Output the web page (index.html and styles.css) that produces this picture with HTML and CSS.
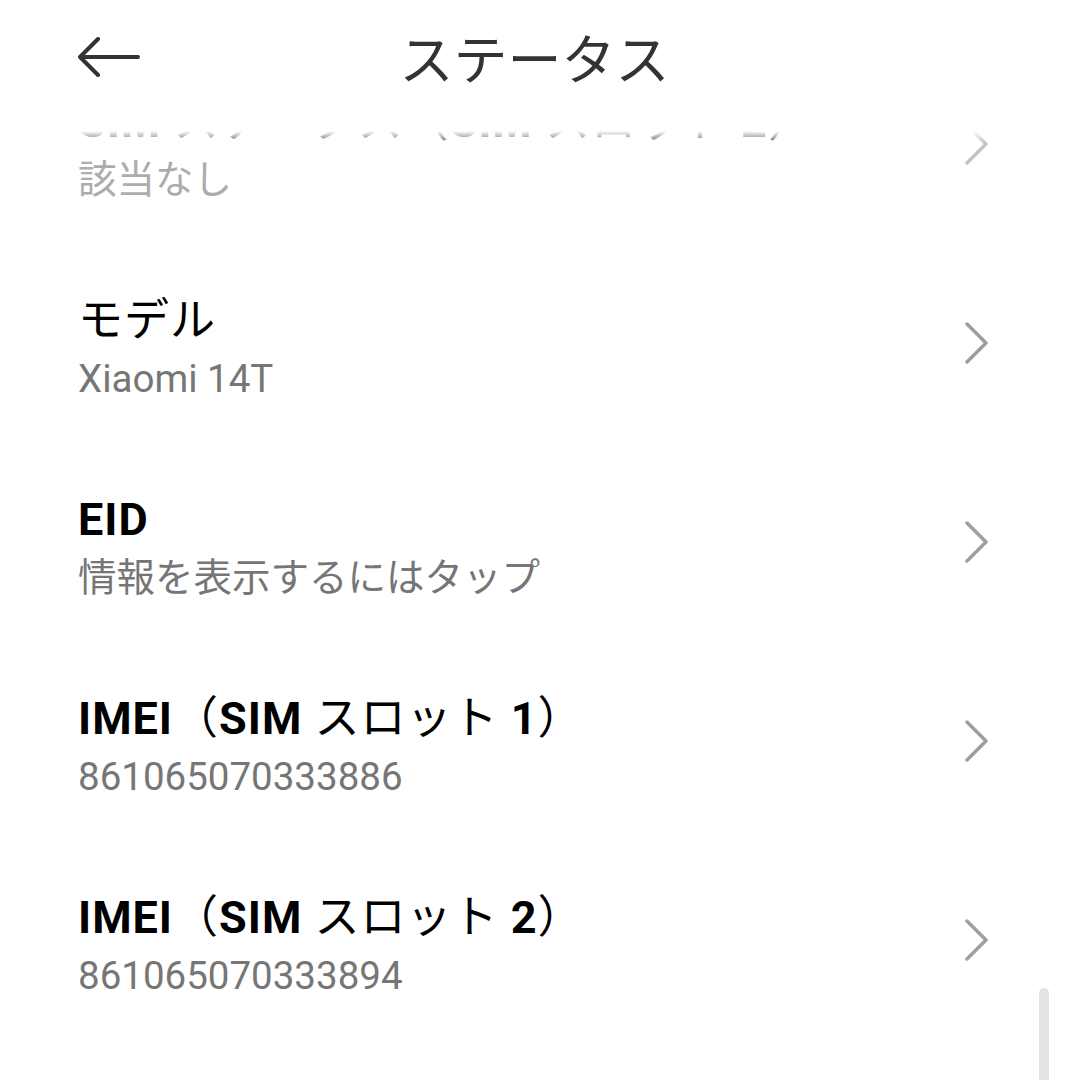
FILE: index.html
```html
<!DOCTYPE html>
<html lang="ja">

<head>
    <meta charset="UTF-8">
    <meta name="viewport" content="width=device-width, initial-scale=1.0">
    <title>ステータス</title>
    <link rel="stylesheet" href="styles.css">
</head>

<body>
    <header class="app-bar">
        <button class="back-btn" aria-label="戻る">
            <svg width="64" height="40" viewBox="0 0 64 40">
                <path d="M62 20H4M22 2L4 20l18 18" fill="none" stroke="#333" stroke-width="4" stroke-linecap="round" stroke-linejoin="round"/>
            </svg>
        </button>
        <h1>ステータス</h1>
        <span></span>
    </header>

    <main class="list">
        <div class="row faded">
            <div class="text">
                <div class="title"><b>SIM</b> ステータス（<b>SIM</b> スロット <b>2</b>）</div>
                <div class="sub">該当なし</div>
            </div>
            <svg class="chev" width="26" height="42" viewBox="0 0 26 42"><path d="M3 2l19 19L3 40" /></svg>
        </div>
        <div class="row">
            <div class="text">
                <div class="title">モデル</div>
                <div class="sub">Xiaomi 14T</div>
            </div>
            <svg class="chev" width="26" height="42" viewBox="0 0 26 42"><path d="M3 2l19 19L3 40" /></svg>
        </div>
        <div class="row">
            <div class="text">
                <div class="title"><b>EID</b></div>
                <div class="sub">情報を表示するにはタップ</div>
            </div>
            <svg class="chev" width="26" height="42" viewBox="0 0 26 42"><path d="M3 2l19 19L3 40" /></svg>
        </div>
        <div class="row">
            <div class="text">
                <div class="title"><b>IMEI</b>（<b>SIM</b> スロット <b>1</b>）</div>
                <div class="sub">861065070333886</div>
            </div>
            <svg class="chev" width="26" height="42" viewBox="0 0 26 42"><path d="M3 2l19 19L3 40" /></svg>
        </div>
        <div class="row">
            <div class="text">
                <div class="title"><b>IMEI</b>（<b>SIM</b> スロット <b>2</b>）</div>
                <div class="sub">861065070333894</div>
            </div>
            <svg class="chev" width="26" height="42" viewBox="0 0 26 42"><path d="M3 2l19 19L3 40" /></svg>
        </div>
    </main>

    <div class="scrollbar"></div>
</body>

</html>
```

FILE: styles.css
```css
body {
    margin: 0;
    padding: 0;
    background: #fff;
    font-family: Roboto, "Noto Sans CJK JP", sans-serif;
    overflow: hidden;
}

.app-bar {
    position: fixed;
    top: 0;
    left: 0;
    right: 0;
    height: 131px;
    background: #fff;
    z-index: 2;
    display: grid;
    grid-template-columns: 1fr auto 1fr;
    align-items: start;
    padding: 0 76px;
}

/* soft fade where the list slides under the bar */
.app-bar::after {
    content: "";
    position: absolute;
    left: 0;
    right: 0;
    top: 131px;
    height: 12px;
    background: linear-gradient(#fff, rgba(255, 255, 255, 0));
}

.back-btn {
    background: none;
    border: none;
    padding: 0;
    margin-top: 37px;
    width: 64px;
    height: 40px;
    cursor: pointer;
    justify-self: start;
}

.back-btn svg {
    display: block;
}

.app-bar h1 {
    margin: 0;
    margin-top: 21px;
    font-family: "Noto Sans CJK JP", sans-serif;
    font-weight: 400;
    font-size: 54px;
    line-height: 72px;
    color: #333;
}

.list {
    padding-top: 44px;
}

.row {
    height: 199px;
    display: flex;
    align-items: center;
    justify-content: space-between;
    padding: 0 79px 0 78px;
}

.row.faded {
    opacity: 0.6;
}

.text {
    padding-top: 12px;
}

.title {
    font-size: 45px;
    line-height: 60px;
    color: #000;
    white-space: nowrap;
    letter-spacing: 1px;
}

.title b {
    font-family: Roboto, sans-serif;
    font-weight: 700;
}

.sub {
    font-size: 38.5px;
    line-height: 56px;
    color: #767676;
}

.chev {
    flex: none;
}

.chev path {
    fill: none;
    stroke: #9e9e9e;
    stroke-width: 3.5;
    stroke-linecap: round;
    stroke-linejoin: round;
}

.scrollbar {
    position: fixed;
    right: 20px;
    top: 988px;
    width: 10px;
    height: 110px;
    border-radius: 5px;
    background: #e4e4e4;
}
```
